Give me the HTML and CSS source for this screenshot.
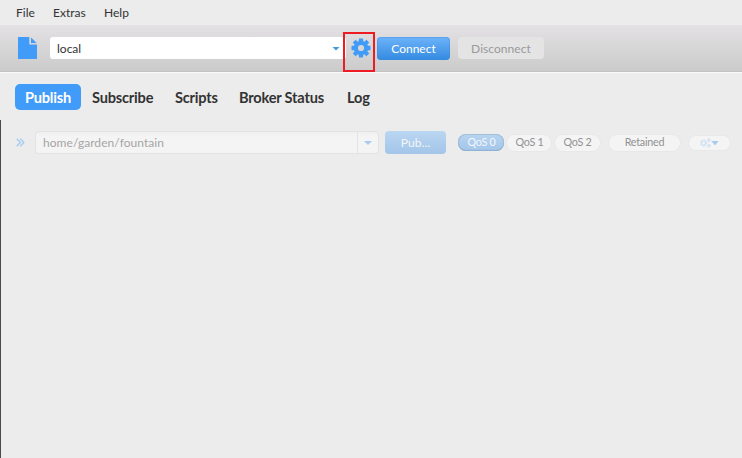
FILE: index.html
```html
<!DOCTYPE html>
<html lang="en">
<head>
<meta charset="utf-8">
<title>MQTT Client</title>
<link rel="stylesheet" href="styles.css">
</head>
<body>
<nav class="menu"><span class="m-file">File</span><span class="m-extras">Extras</span><span class="m-help">Help</span></nav>
<header class="toolbar">
  <svg class="file-icon" width="19" height="22" viewBox="0 0 19 22"><path d="M0 0H11.3V7.5H19V22H0Z"/><path d="M13 .5L18.7 6H13Z"/></svg>
  <div class="profile"><span>local</span><i class="arrow"></i></div>
  <div class="settings">
    <svg width="20" height="20" viewBox="-10 -10 20 20"><path fill-rule="evenodd" d="M-1.9-9.5H1.9L2.4-6.8L3.3-6.3L5.4-8.2L8.2-5.4L6.3-3.3L6.8-2.4L9.5-1.9V1.9L6.8 2.4L6.3 3.3L8.2 5.4L5.4 8.2L3.3 6.3L2.4 6.8L1.9 9.5H-1.9L-2.4 6.8L-3.3 6.3L-5.4 8.2L-8.2 5.4L-6.3 3.3L-6.8 2.4L-9.5 1.9V-1.9L-6.8-2.4L-6.3-3.3L-8.2-5.4L-5.4-8.2L-3.3-6.3L-2.4-6.8ZM0-3.1A3.1 3.1 0 1 0 0 3.1A3.1 3.1 0 1 0 0-3.1Z"/></svg>
  </div>
  <button class="btn connect">Connect</button>
  <button class="btn disconnect">Disconnect</button>
</header>
<nav class="tabs">
  <span class="tab active">Publish</span><span class="tab t-sub">Subscribe</span><span class="tab t-scr">Scripts</span><span class="tab t-bro">Broker Status</span><span class="tab t-log">Log</span>
</nav>
<main class="pane">
  <div class="row">
    <svg class="chev" width="9" height="9" viewBox="0 0 9 9"><path d="M.8 .8L4.3 4.5L.8 8.2M4.3 .8L7.8 4.5L4.3 8.2"/></svg>
    <div class="topic"><span>home/garden/fountain</span><div class="drop"><i class="arrow"></i></div></div>
    <button class="btn publish">Pub...</button>
    <span class="pill q0">QoS 0</span><span class="pill q1">QoS 1</span><span class="pill q2">QoS 2</span><span class="pill retained">Retained</span>
    <span class="pill options"><svg width="11" height="10" viewBox="0 0 11 10"><g class="cogs"><circle cx="3.6" cy="5" r="2.1"/><circle class="teeth" cx="3.6" cy="5" r="3.2"/><circle cx="8.9" cy="2.2" r="1.2"/><circle cx="8.9" cy="7.8" r="1.2"/></g></svg><i class="arrow"></i></span>
  </div>
</main>
</body>
</html>
```

FILE: styles.css
```css
* { box-sizing: border-box; }
body { margin: 0; width: 742px; height: 458px; overflow: hidden; background: #ececec; color: #333; font: 12px/16px Lato, sans-serif; }
.menu { display: flex; height: 25px; padding: 5px 0 0 16px; }
.m-file { width: 37px; }
.m-extras { width: 51px; }
.toolbar { display: flex; align-items: flex-start; height: 48px; padding-left: 18px; background: linear-gradient(#e3e1e3, #cbcbcb); border-bottom: 1px solid #fafafa; box-shadow: inset 0 -1px #c2c2c2; }
.file-icon { margin-top: 12px; fill: #419bf9; flex: none; }
.profile { display: flex; align-items: center; justify-content: space-between; width: 296px; height: 22px; margin: 12px 0 0 13px; padding: 1px 6px 0 7px; background: #fff; border-radius: 3px; }
.arrow { width: 8px; height: 4px; background: #419bdf; clip-path: polygon(0 0, 100% 0, 50% 100%); }
.settings { width: 32px; height: 40px; margin: 7px 0 0 -3px; padding: 4px 0 0 6px; border: 2px solid #ed1c24; flex: none; }
.settings svg { display: block; fill: #419bf9; }
.btn { padding: 0; border: 0; border-radius: 4px; font: 12px/16px Lato, sans-serif; text-align: center; flex: none; }
.connect { width: 73px; height: 23px; margin: 12px 0 0 2px; color: #fff; background: linear-gradient(#6db3fa, #348ae0); box-shadow: inset 0 0 0 1px #3b8ddd66; }
.disconnect { width: 86px; height: 22px; margin: 12px 0 0 8px; padding-top: 1px; background: #e4e4e4; color: #999; letter-spacing: .05px; }
.tabs { display: flex; height: 47px; padding: 11px 0 0 15px; font-size: 14.6px; font-weight: 700; line-height: 27px; letter-spacing: -.2px; }
.tab { white-space: nowrap; color: #333; flex: none; }
.active { width: 66px; height: 26px; margin-right: 11px; border-radius: 5px; background: #419bf9; color: #fff; text-align: center; }
.t-sub { width: 83px; }
.t-scr { width: 64px; }
.t-bro { width: 108px; }
.pane { height: 338px; border-left: 1px solid #4c4c4c; padding: 11px 0 0 15px; }
.row { display: flex; align-items: flex-start; }
.chev { margin-top: 7px; fill: none; stroke: #a9cdf2; stroke-width: 1.5; flex: none; }
.topic { display: flex; align-items: center; justify-content: space-between; width: 344px; height: 23px; margin: 0 0 0 10px; padding-left: 7px; border: 1px solid #e3e3e3; border-radius: 4px; background: linear-gradient(#efefef, #f4f4f4 4px); color: #a5a5a5; letter-spacing: .05px; }
.drop { display: flex; align-items: center; justify-content: center; width: 21px; height: 21px; padding-top: 1px; border-left: 1px solid #e3e3e3; }
.drop .arrow, .options .arrow { background: #a6cbef; }
.publish { width: 61px; height: 23px; margin-left: 6px; background: linear-gradient(#bad6f2, #a3c5e8); color: #f3f6f9; letter-spacing: .1px; }
.pill { display: flex; align-items: center; justify-content: center; height: 16px; margin-top: 4px; border-radius: 8px; background: #f4f4f4; box-shadow: 0 0 0 1px #e8e8e8; color: #929292; font-size: 10.8px; line-height: 14px; letter-spacing: -.25px; padding-bottom: 2px; white-space: nowrap; flex: none; }
.q0 { width: 46px; height: 17px; margin: 3px 0 0 12px; padding: 0 0 1px 1px; background: linear-gradient(#b8d4f1, #a3c6e9); box-shadow: inset 0 -1px 1px #8fb0d2, inset 0 0 0 1px #a3bfdb; color: #f4f7fa; }
.q1 { width: 44px; margin-left: 3px; padding-left: 1px; }
.q2 { width: 45px; margin-left: 4px; }
.retained { width: 71px; margin-left: 9px; }
.options { width: 41px; height: 14px; margin: 5px 0 0 9px; padding: 0; }
.options .arrow { height: 5px; }
.cogs { fill: none; stroke: #c5dcf4; stroke-width: 1; }
.cogs .teeth { stroke-dasharray: 1.3 1.2; }
```
